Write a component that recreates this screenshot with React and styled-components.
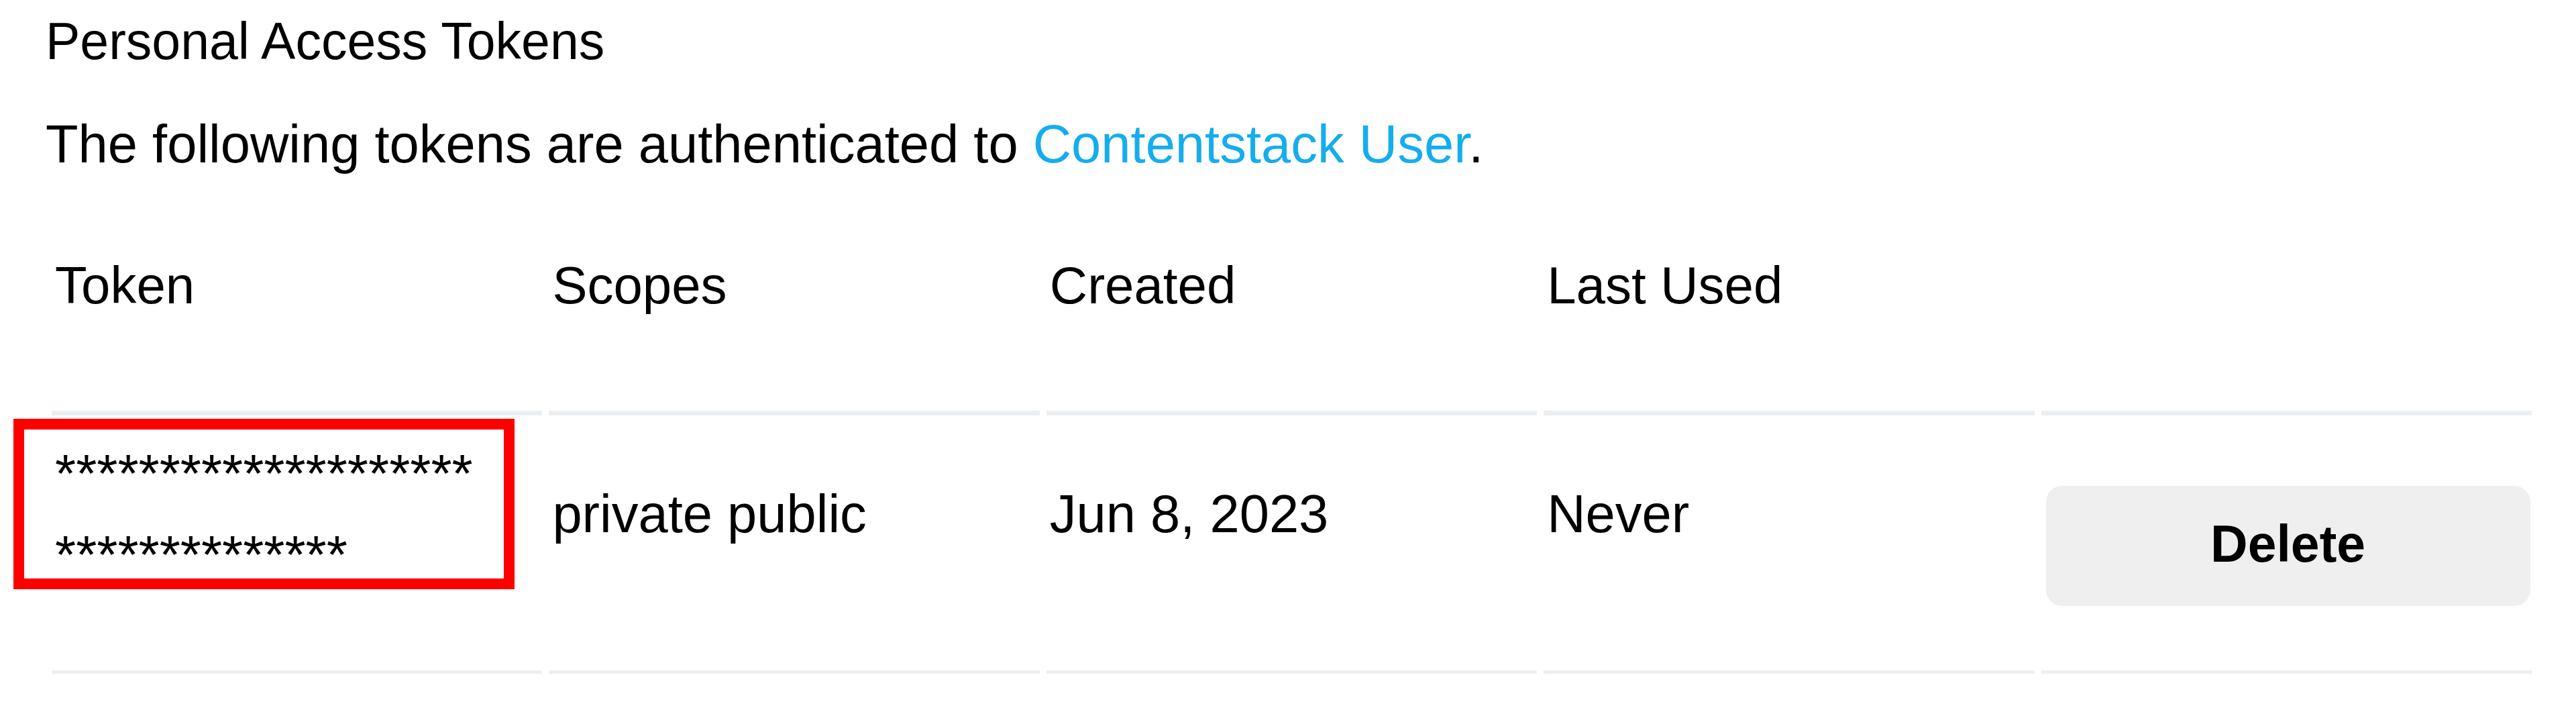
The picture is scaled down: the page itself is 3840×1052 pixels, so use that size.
import React from "react";
import styled, { createGlobalStyle } from "styled-components";

const GlobalStyle = createGlobalStyle`
  html, body {
    margin: 0;
    padding: 0;
    background: #ffffff;
  }
  body {
    font-family: "Liberation Sans", Arial, Helvetica, sans-serif;
    color: #000000;
  }
`;

const tokens = [
  {
    id: 1,
    token: "**********************************",
    scopes: "private public",
    created: "Jun 8, 2023",
    lastUsed: "Never",
  },
];

const columns = ["Token", "Scopes", "Created", "Last Used", ""];

const App = () => {
  return (
    <Page>
      <GlobalStyle />
      <Title>Personal Access Tokens</Title>
      <Intro>
        The following tokens are authenticated to{" "}
        <UserLink href="#">Contentstack User</UserLink>.
      </Intro>
      <Table>
        {columns.map((col, i) => (
          <HeadCell key={i}>{col}</HeadCell>
        ))}
        {tokens.map((t) => (
          <React.Fragment key={t.id}>
            <BodyCell $pad={26}>
              <TokenText>{t.token}</TokenText>
              <Highlight />
            </BodyCell>
            <BodyCell $pad={102}>{t.scopes}</BodyCell>
            <BodyCell $pad={102}>{t.created}</BodyCell>
            <BodyCell $pad={102}>{t.lastUsed}</BodyCell>
            <BodyCell $pad={105}>
              <DeleteButton>Delete</DeleteButton>
            </BodyCell>
          </React.Fragment>
        ))}
      </Table>
    </Page>
  );
};

const Page = styled.div`
  padding: 17px 0 0 68px;
`;

const Title = styled.h2`
  margin: 0;
  font-size: 77px;
  font-weight: 400;
  line-height: 88px;
`;

const Intro = styled.p`
  margin: 65px 0 0 0;
  font-size: 79.5px;
  line-height: 90px;
`;

const UserLink = styled.a`
  color: #15adee;
  text-decoration: none;
`;

const Table = styled.div`
  display: grid;
  grid-template-columns: repeat(5, 1fr);
  column-gap: 10px;
  width: 3697px;
  margin-left: 9px;
  font-size: 79.5px;
  line-height: 90px;
`;

const HeadCell = styled.div`
  box-sizing: border-box;
  height: 359px;
  padding: 120px 0 0 5px;
  border-bottom: 7px solid #eceff1;
  font-size: 78px;
  font-weight: 400;
`;

const BodyCell = styled.div`
  position: relative;
  box-sizing: border-box;
  height: 385px;
  padding: ${(props) => props.$pad}px 0 0 5px;
  border-bottom: 5px solid #eceff1;
`;

const TokenText = styled.div`
  width: 636px;
  word-break: break-all;
  line-height: 121px;
  font-size: 80px;
`;

const Highlight = styled.div`
  position: absolute;
  left: -57px;
  top: 5px;
  width: 747px;
  height: 254px;
  box-sizing: border-box;
  border: 16px solid #ff0000;
  pointer-events: none;
`;

const DeleteButton = styled.button`
  display: flex;
  align-items: center;
  justify-content: center;
  box-sizing: border-box;
  width: 722px;
  height: 179px;
  margin-left: 2px;
  padding: 0 0 6px 0;
  border: none;
  border-radius: 24px;
  background-color: #efefef;
  color: #000000;
  font-family: "Liberation Sans", Arial, Helvetica, sans-serif;
  font-size: 77px;
  font-weight: 700;
  cursor: pointer;
`;

export default App;
